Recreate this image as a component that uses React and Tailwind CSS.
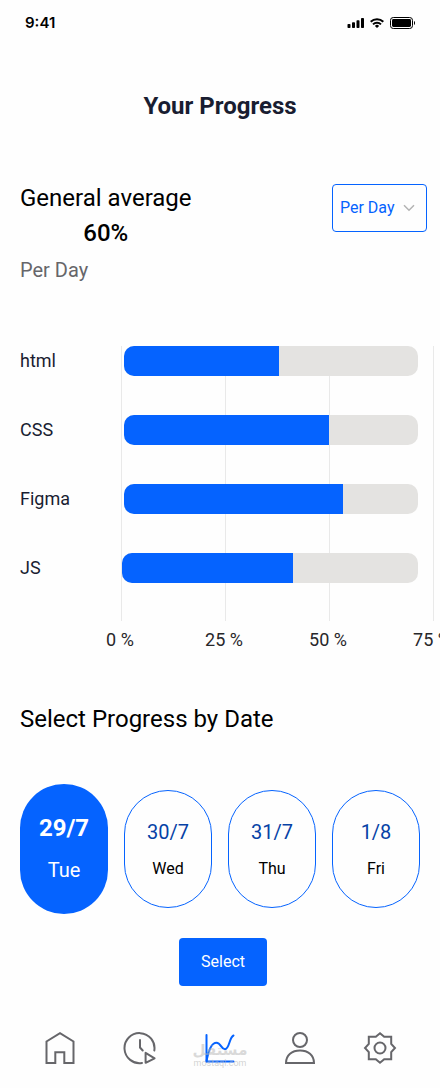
import React, { useState } from 'react';
import clsx from 'clsx';

const skills = [
  { name: 'html', value: 155, start: 'ml-[3px]' },
  { name: 'CSS', value: 205, start: 'ml-[3px]' },
  { name: 'Figma', value: 219, start: 'ml-[3px]' },
  { name: 'JS', value: 171, start: 'ml-px' },
];

const ticks = ['0 %', '25 %', '50 %', '75 %'];

const days = [
  { date: '29/7', day: 'Tue' },
  { date: '30/7', day: 'Wed' },
  { date: '31/7', day: 'Thu' },
  { date: '1/8', day: 'Fri' },
];

const StatusBar = () => (
  <div className="flex h-[46px] items-center justify-between px-[25px] text-black">
    <span className="font-['Inter',sans-serif] text-[15px] font-semibold leading-5">9:41</span>
    <div className="flex items-center gap-[6px]">
      <svg width="17" height="12" viewBox="0 0 17 12" fill="currentColor" aria-hidden="true">
        <rect x="0.5" y="7" width="3" height="4" rx="0.8" />
        <rect x="5" y="5.3" width="3" height="5.7" rx="0.8" />
        <rect x="9.5" y="3.2" width="3" height="7.8" rx="0.8" />
        <rect x="14" y="1" width="3" height="10" rx="0.8" />
      </svg>
      <svg width="14" height="12" viewBox="0 0 14 12" fill="none" stroke="currentColor" strokeWidth="2" aria-hidden="true">
        <path d="M0.7 4.7a9 9 0 0 1 12.6 0" />
        <path d="M3 7.4a5.7 5.7 0 0 1 8 0" />
        <path d="M7 11 4.9 8.9a3 3 0 0 1 4.2 0Z" fill="currentColor" stroke="none" />
      </svg>
      <svg width="25" height="12" viewBox="0 0 25 12" fill="none" aria-hidden="true">
        <rect x="0.5" y="0.5" width="22" height="11" rx="2.8" stroke="currentColor" />
        <rect x="2" y="2" width="19" height="8" rx="1.4" fill="currentColor" />
        <path d="M24 4v4c.6-.2 1-1 1-2s-.4-1.800-1-2Z" fill="currentColor" />
      </svg>
    </div>
  </div>
);

const ProgressChart = () => (
  <section className="mt-[62px] overflow-hidden" aria-label="Progress by skill">
    <div className="grid grid-cols-[121px_minmax(0,1fr)]">
      {/* Grid lines */}
      <div className="col-start-2 row-start-1 flex">
        {ticks.map((tick) => (
          <div key={tick} className="w-[104px] shrink-0 border-l border-[#e9e9e9]" />
        ))}
      </div>

      {/* Bars */}
      <div className="col-span-2 col-start-1 row-start-1 flex flex-col gap-[39px] pb-[38px]">
        {skills.map((skill) => (
          <div key={skill.name} className="flex h-[30px] items-center pr-[22px]">
            <span className="w-[121px] shrink-0 pl-5 text-lg leading-[30px] text-[#191d31]">{skill.name}</span>
            <div className={clsx('h-full flex-1 overflow-hidden rounded-[10px] bg-[#e4e3e1]', skill.start)}>
              <div className="h-full bg-[#0563ff]" style={{ width: skill.value }} />
            </div>
          </div>
        ))}
      </div>
    </div>

    {/* Axis */}
    <div className="flex pl-[68px] pt-[6px]">
      {ticks.map((tick) => (
        <span key={tick} className="w-[104px] shrink-0 text-center text-lg leading-[26px] text-[#27272a]">{tick}</span>
      ))}
    </div>
  </section>
);

const DayPicker = ({ selected, onSelect }) => (
  <div className="mt-[49px] grid grid-cols-4 items-center gap-4 px-5">
    {days.map(({ date, day }) => {
      const active = date === selected;
      return (
        <button
          key={date}
          type="button"
          aria-pressed={active}
          onClick={() => onSelect(date)}
          className={clsx(
            'flex flex-col items-center justify-center rounded-full',
            active ? 'h-[130px] gap-[14px] bg-[#0563ff] text-white' : 'h-[118px] gap-[13px] border border-[#0563ff] pb-[2px] text-black'
          )}
        >
          <span className={clsx('leading-7', active ? 'text-2xl font-bold' : 'text-xl text-[#0642a6]')}>{date}</span>
          <span className={clsx(active ? 'text-xl leading-7' : 'text-base leading-5')}>{day}</span>
        </button>
      );
    })}
  </div>
);

const NavIcon = ({ children }) => (
  <svg width="34" height="34" viewBox="0 0 34 34" fill="none" stroke="currentColor" strokeWidth="2" aria-hidden="true">
    {children}
  </svg>
);

const BottomNav = () => (
  <nav className="mt-[45px] flex px-5 text-[#66666a]">
    <a href="#home" aria-label="Home" className="flex flex-1 justify-center">
      <NavIcon>
        <path d="M3.500 32V10.500L17 2.200l13.500 8.300V32h-9.200V21.300h-9V32Z" />
      </NavIcon>
    </a>
    <a href="#history" aria-label="History" className="flex flex-1 justify-center">
      <NavIcon>
        <path d="M31.300 19.500A15 15 0 1 0 19 31.900M17 9v7.500l2.700 3" strokeLinecap="round" />
        <path d="M22.600 21.800v10l9-4.500Z" strokeLinejoin="round" />
      </NavIcon>
    </a>
    <a href="#progress" aria-label="Progress" className="relative flex flex-1 justify-center text-[#0563ff]">
      <NavIcon>
        <path d="M3.500 4v26.500h27" strokeLinecap="round" strokeLinejoin="round" />
        <path d="M3.500 30.500C5.500 19 9 11.700 13.500 11.700c4.500 0 4.500 6.500 8.500 6.500 4.500 0 4-11.500 8.500-13.700" strokeLinecap="round" />
      </NavIcon>
      <span className="absolute inset-x-0 top-[11px] text-center font-['DejaVu_Sans',sans-serif] text-[15px] font-bold leading-4 text-[#b5b5b5]/50" dir="rtl">مستقل</span>
      <span className="absolute inset-x-0 top-[27px] text-center text-[9px] leading-[10px] text-[#b5b5b5]/60">mostaql.com</span>
    </a>
    <a href="#profile" aria-label="Profile" className="flex flex-1 justify-center">
      <NavIcon>
        <circle cx="17" cy="9" r="7" />
        <path d="M3 32c0-8 6-12.500 14-12.500S31 24 31 32Z" />
      </NavIcon>
    </a>
    <a href="#settings" aria-label="Settings" className="flex flex-1 justify-center">
      <NavIcon>
        <path d="m17 2.200 4.200 3.600h7v7L32 17l-3.800 4.200v7h-7L17 31.800l-4.200-3.600h-7v-7L2 17l3.800-4.200v-7h7Z" />
        <circle cx="17" cy="17" r="5.500" />
      </NavIcon>
    </a>
  </nav>
);

export default function App() {
  const [selected, setSelected] = useState('29/7');

  return (
    <main className="min-h-screen overflow-hidden bg-[#fefefe] pb-5 font-['Roboto',sans-serif]">
      <StatusBar />
      <h1 className="mt-11 text-center text-2xl font-bold leading-8 text-[#191d31]">Your Progress</h1>

      {/* Average */}
      <section className="mt-[60px] flex items-start justify-between pl-5 pr-[13px]">
        <div className="text-2xl text-black">
          <h2 className="leading-8">General average</h2>
          <p className="mt-[3px] text-center font-medium leading-8">60%</p>
          <p className="mt-[7px] text-xl leading-7 text-[#66666a]">Per Day</p>
        </div>
        <div className="mt-[2px] grid w-[95px] items-center">
          <select
            aria-label="Period"
            className="col-start-1 row-start-1 h-12 w-full appearance-none rounded border border-[#0563ff] bg-transparent pl-[7px] text-base text-[#0563ff]"
          >
            <option>Per Day</option>
            <option>Per Week</option>
          </select>
          <svg className="pointer-events-none col-start-1 row-start-1 mr-3 justify-self-end" width="12" height="8" viewBox="0 0 12 8" fill="none" stroke="#b3b3b3" strokeWidth="1.500" aria-hidden="true">
            <path d="m1 1.200 5 5 5-5" />
          </svg>
        </div>
      </section>

      <ProgressChart />

      <h2 className="mt-[50px] px-5 text-2xl leading-8 text-black">Select Progress by Date</h2>
      <DayPicker selected={selected} onSelect={setSelected} />

      <div className="mt-6 flex justify-center pl-[6px]">
        <button type="button" className="h-12 w-[88px] rounded bg-[#0563ff] text-base text-white">Select</button>
      </div>

      <BottomNav />
    </main>
  );
}
